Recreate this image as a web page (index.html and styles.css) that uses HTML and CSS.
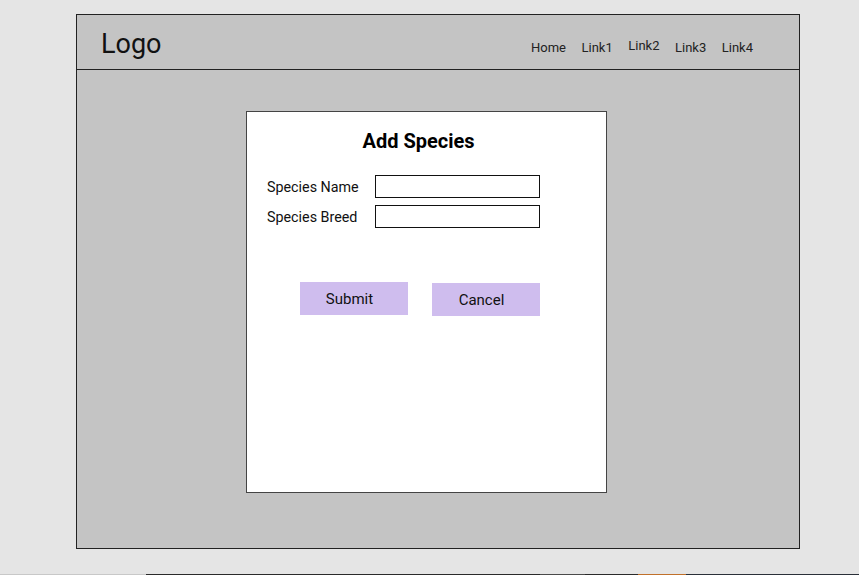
FILE: index.html
```html
<!DOCTYPE html>
<html>
<head>
<meta charset="utf-8">
<link rel="stylesheet" href="styles.css">
</head>
<body>
<div class="frame">
  <header class="header">
    <div class="logo">Logo</div>
    <nav class="nav">
      <a class="nav-link">Home</a>
      <a class="nav-link">Link1</a>
      <a class="nav-link raised">Link2</a>
      <a class="nav-link">Link3</a>
      <a class="nav-link">Link4</a>
    </nav>
  </header>
  <main class="main">
    <section class="card">
      <h1 class="title">Add Species</h1>
      <div class="row">
        <label class="label">Species Name</label>
        <input class="field" type="text">
      </div>
      <div class="row">
        <label class="label">Species Breed</label>
        <input class="field" type="text">
      </div>
      <div class="buttons">
        <button class="btn">Submit</button>
        <button class="btn btn-low">Cancel</button>
      </div>
    </section>
  </main>
</div>
<div class="taskbar"></div>
</body>
</html>
```
FILE: styles.css
```css
html, body {
  margin: 0;
  padding: 0;
  background: #e5e5e5;
  font-family: Roboto, "Liberation Sans", sans-serif;
  color: #111;
}
body {
  height: 575px;
  overflow: hidden;
  display: flex;
  flex-direction: column;
}
.frame {
  margin: 14px 0 0 76px;
  width: 722px;
  height: 533px;
  border: 1px solid #222;
  background: #c4c4c4;
  display: flex;
  flex-direction: column;
}
.header {
  height: 54px;
  border-bottom: 1px solid #222;
  display: flex;
  align-items: center;
  justify-content: space-between;
  box-sizing: content-box;
}
.logo {
  margin-left: 24px;
  font-size: 27px;
  line-height: 30px;
  margin-top: 4px;
}
.nav {
  display: flex;
  align-items: flex-start;
  gap: 15.5px;
  margin-right: 46px;
  margin-top: 10px;
  font-size: 13px;
}
.nav-link {
  color: #222;
}
.raised {
  margin-top: -2px;
}
.main {
  flex: 1;
  display: flex;
  align-items: flex-start;
}
.card {
  margin: 41px 0 0 169px;
  width: 359px;
  height: 380px;
  background: #fff;
  border: 1px solid #444;
  display: flex;
  flex-direction: column;
}
.title {
  margin: 18px 0 23px -16px;
  font-size: 20px;
  line-height: 22px;
  font-weight: 700;
  text-align: center;
  color: #000;
}
.row {
  display: flex;
  align-items: center;
  margin-left: 20px;
  margin-bottom: 7px;
}
.label {
  width: 108px;
  font-size: 14.3px;
  color: #111;
}
.field {
  width: 165px;
  height: 23px;
  box-sizing: border-box;
  border: 1px solid #111;
  margin: 0;
  padding: 0;
  background: #fff;
}
.buttons {
  display: flex;
  gap: 24px;
  margin: 47px 0 0 53px;
  align-items: flex-start;
}
.btn {
  width: 108px;
  height: 33px;
  border: none;
  background: #cfbdee;
  font-family: Roboto, "Liberation Sans", sans-serif;
  font-size: 15px;
  color: #111;
  padding: 0 9px 0 0;
}
.btn-low {
  margin-top: 1px;
}
.taskbar {
  margin-top: auto;
  height: 1px;
  background: linear-gradient(to right, #c8c8c8 0 146px, #2a2a2a 146px 540px, #4a4a4a 540px 585px, #2a2a2a 585px 638px, #c0702a 638px 686px, #2a3038 686px);
}
```
